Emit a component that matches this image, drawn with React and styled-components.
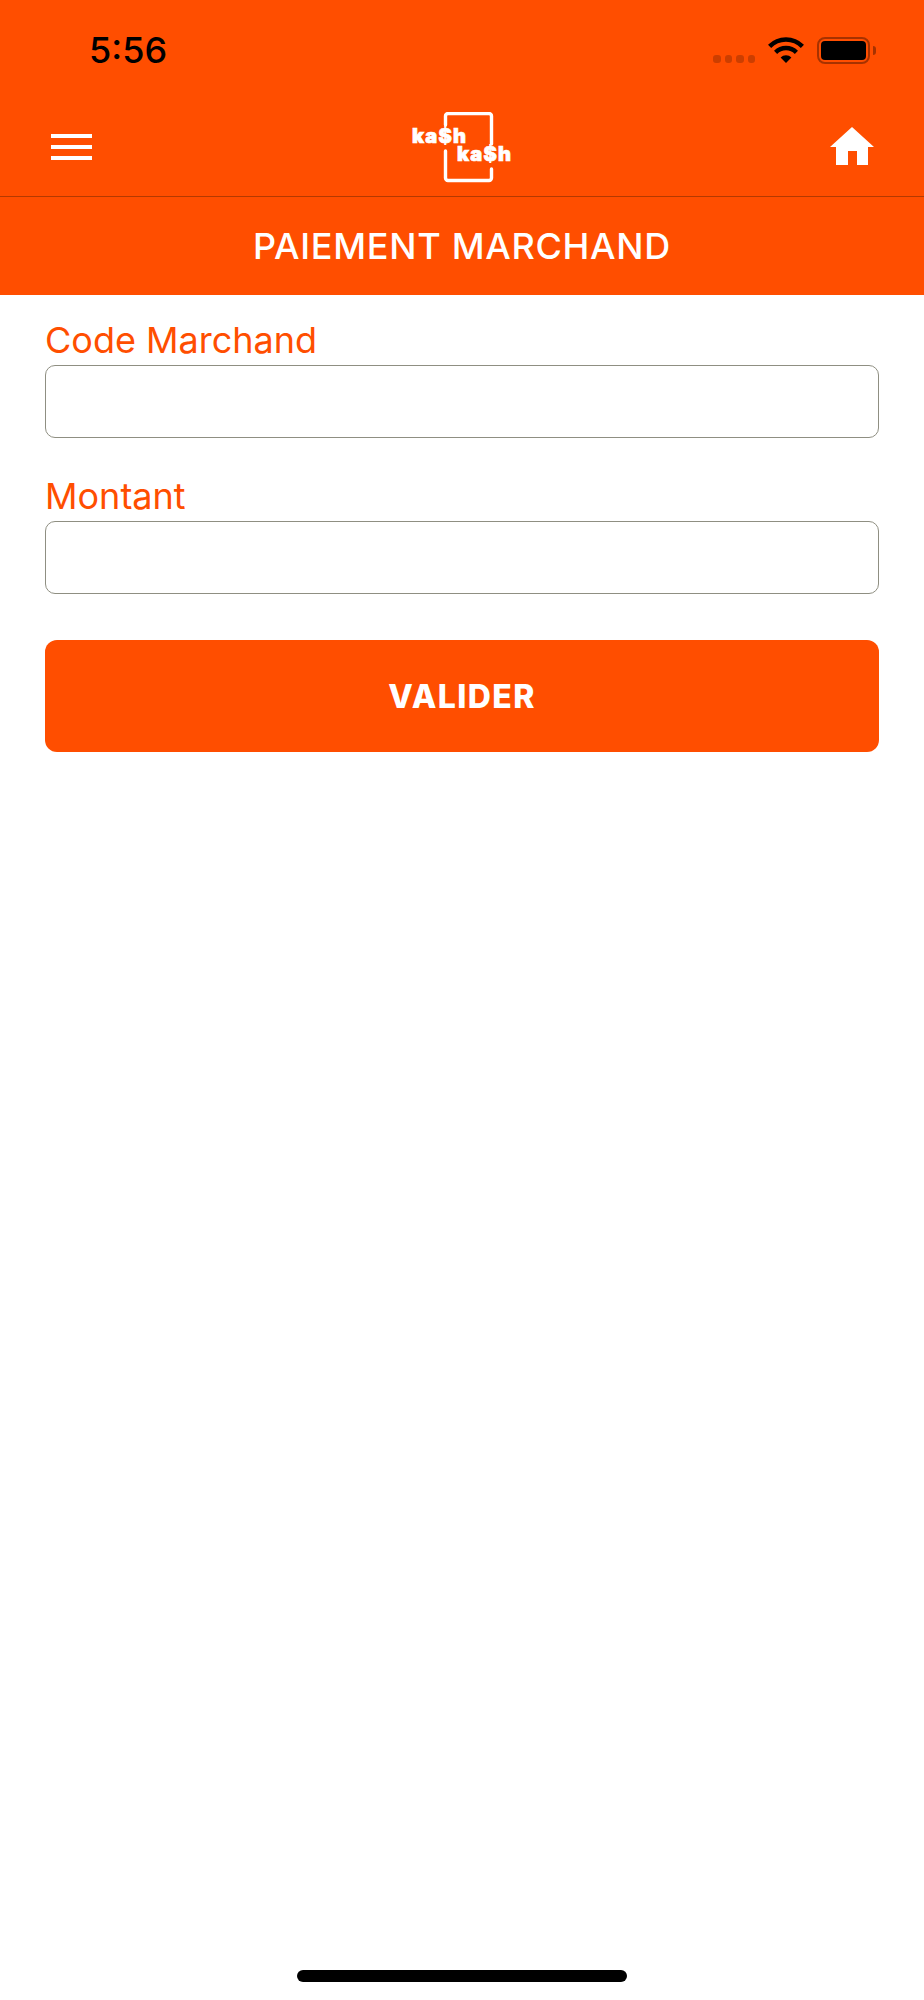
import styled, { createGlobalStyle } from "styled-components";

const ORANGE = "#ff4e00";

const GlobalStyle = createGlobalStyle`
  html, body {
    margin: 0;
    padding: 0;
    background: #ffffff;
  }
  * {
    box-sizing: border-box;
  }
`;

const Page = styled.div`
  width: 924px;
  height: 2000px;
  display: flex;
  flex-direction: column;
  font-family: Inter, "Liberation Sans", sans-serif;
  background: #ffffff;
`;

const Header = styled.header`
  background: ${ORANGE};
  color: #ffffff;
`;

const StatusBar = styled.div`
  height: 88px;
  display: flex;
  align-items: flex-start;
  padding: 28px 48px 0 89px;
`;

const Time = styled.span`
  font-size: 36px;
  line-height: 44px;
  font-weight: 500;
  color: #000000;
  margin-right: auto;
`;

const Signal = styled.div`
  display: flex;
  gap: 4px;
  margin: 27px 13px 0 0;
`;

const SignalDot = styled.span`
  width: 7.5px;
  height: 7.5px;
  border-radius: 3px;
  background: rgba(0, 0, 0, 0.2);
`;

const Battery = styled.div`
  display: flex;
  align-items: center;
  gap: 3px;
  margin: 9px 0 0 13px;
`;

const BatteryShell = styled.div`
  width: 53px;
  height: 27px;
  padding: 2px;
  border: 2px solid rgba(0, 0, 0, 0.35);
  border-radius: 8px;
`;

const BatteryLevel = styled.div`
  width: 100%;
  height: 100%;
  background: #000000;
  border-radius: 4px;
`;

const BatteryNub = styled.div`
  width: 3px;
  height: 9px;
  background: rgba(0, 0, 0, 0.35);
  border-radius: 0 3px 3px 0;
`;

const NavBar = styled.nav`
  height: 109px;
  display: flex;
  align-items: flex-start;
  justify-content: space-between;
  padding: 24px 50px 0 51px;
  border-bottom: 1px solid rgba(120, 40, 0, 0.55);
`;

const Burger = styled.div`
  width: 41px;
  display: flex;
  flex-direction: column;
  gap: 7px;
  margin-top: 22px;
`;

const BurgerLine = styled.span`
  height: 4px;
  background: #ffffff;
`;

const TitleBand = styled.div`
  height: 98px;
  display: flex;
  align-items: center;
  justify-content: center;
`;

const Title = styled.h1`
  margin: 0;
  font-size: 36px;
  font-weight: 500;
  line-height: 40px;
  letter-spacing: 0.7px;
`;

const Form = styled.form`
  display: flex;
  flex-direction: column;
  padding: 22px 45px 0 45px;
`;

const Field = styled.div`
  display: flex;
  flex-direction: column;
  margin-bottom: ${(p) => p.$gap}px;
`;

const Label = styled.label`
  font-size: 36px;
  line-height: 46px;
  padding-bottom: 2px;
  font-weight: 400;
  color: ${ORANGE};
`;

const Input = styled.input`
  height: 73px;
  border: 1.5px solid #8f8f82;
  border-radius: 10px;
  background: #ffffff;
  outline: none;
`;

const Submit = styled.button`
  height: 112px;
  border: none;
  border-radius: 12px;
  background: ${ORANGE};
  color: #ffffff;
  font-family: inherit;
  font-size: 32px;
  font-weight: 800;
  letter-spacing: 1.4px;
`;

const HomeBar = styled.div`
  width: 330px;
  height: 12px;
  margin: auto auto 18px;
  border-radius: 6px;
  background: #000000;
`;

const Wifi = () => (
  <svg width="36" height="27" viewBox="0 0 36 27" style={{ marginTop: 9 }}>
    <g fill="none" stroke="#000" strokeWidth="4.4">
      <path d="M1.6 9.4a23 23 0 0 1 32.8 0" />
      <path d="M7.6 15.4a14.6 14.6 0 0 1 20.8 0" />
    </g>
    <path d="M12.6 20.4a7.6 7.6 0 0 1 10.8 0L18 26z" fill="#000" />
  </svg>
);

const Logo = () => (
  <svg width="102" height="72" viewBox="0 0 102 72">
    <g fill="none" stroke="#fff" strokeWidth="3.4" strokeLinecap="round">
      <path d="M35.5 13V4a2.5 2.5 0 0 1 2.5-2.5H79a2.5 2.5 0 0 1 2.5 2.5V32" />
      <path d="M81.5 57V66a2.5 2.5 0 0 1-2.5 2.5H38a2.5 2.5 0 0 1-2.5-2.5V39" />
    </g>
    <g
      fill="#fff"
      stroke="#fff"
      strokeWidth="0.7"
      fontFamily="Inter, sans-serif"
      fontSize="20"
      fontWeight="900"
    >
      <text x="2" y="31" textLength="54">ka$h</text>
      <text x="47" y="49" textLength="54">ka$h</text>
    </g>
  </svg>
);

const HomeIcon = () => (
  <svg width="44" height="38" viewBox="0 0 44 38" style={{ marginTop: 15 }}>
    <path fill="#fff" d="M22 0 44 20H38V38H27V24H18V38H6V20H0Z" />
  </svg>
);

const App = () => {
  return (
    <Page>
      <GlobalStyle />
      <Header>
        <StatusBar>
          <Time>5:56</Time>
          <Signal>
            {[0, 1, 2, 3].map((i) => (
              <SignalDot key={i} />
            ))}
          </Signal>
          <Wifi />
          <Battery>
            <BatteryShell>
              <BatteryLevel />
            </BatteryShell>
            <BatteryNub />
          </Battery>
        </StatusBar>
        <NavBar>
          <Burger>
            <BurgerLine />
            <BurgerLine />
            <BurgerLine />
          </Burger>
          <Logo />
          <HomeIcon />
        </NavBar>
        <TitleBand>
          <Title>PAIEMENT MARCHAND</Title>
        </TitleBand>
      </Header>
      <Form>
        <Field $gap={35}>
          <Label>Code Marchand</Label>
          <Input />
        </Field>
        <Field $gap={46}>
          <Label>Montant</Label>
          <Input />
        </Field>
        <Submit type="button">VALIDER</Submit>
      </Form>
      <HomeBar />
    </Page>
  );
};

export default App;
